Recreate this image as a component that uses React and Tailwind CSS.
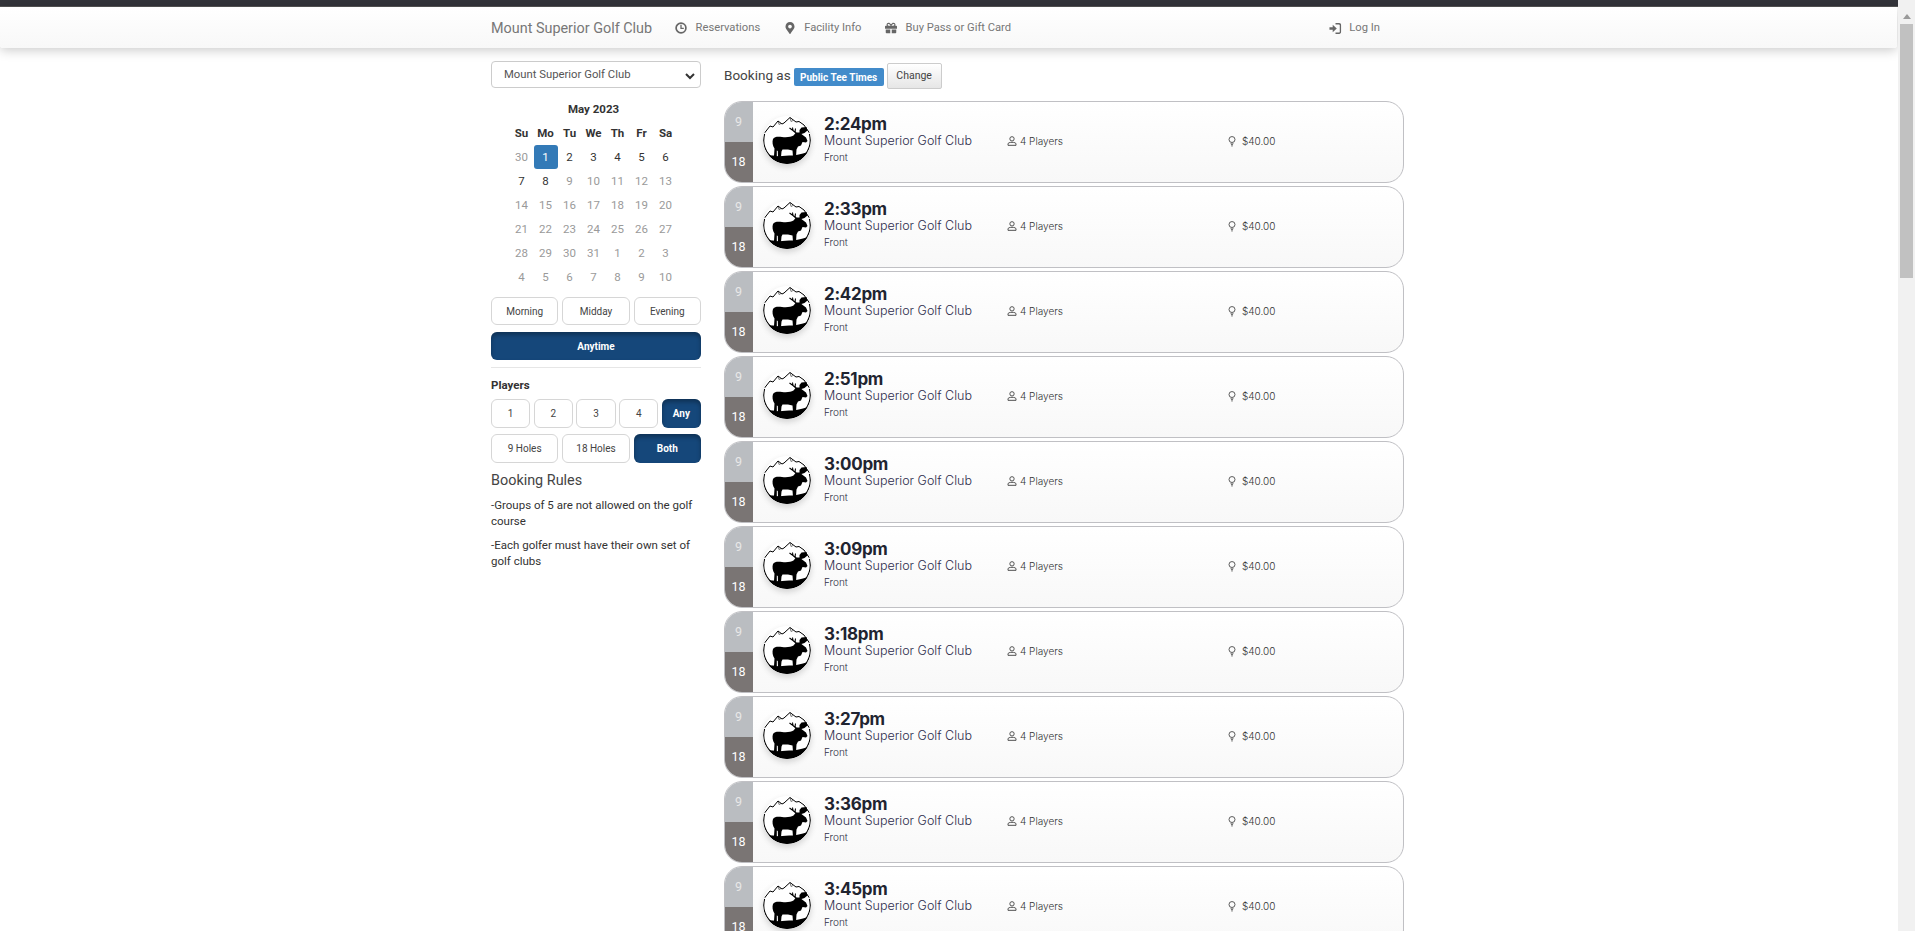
import React from "react";
import { FaMapMarkerAlt, FaGift } from "react-icons/fa";

const roboto = "font-['Roboto',sans-serif]";
const card = "font-['Inter',sans-serif]";

function Moose() {
  return (
    <svg viewBox="0 0 48 48" className="w-12 h-12 shrink-0 rounded-full shadow-[0_3px_6px_rgba(0,0,0,0.16)]">
      <defs>
        <clipPath id="disc"><circle cx="24" cy="24" r="24" /></clipPath>
      </defs>
      <circle cx="24" cy="24" r="24" fill="#fff" />
      <g clipPath="url(#disc)">
        <path d="M0 39 L10 39.5 C16 41 22 39.5 30 39.5 C36 39 42 37 48 35 L48 48 L0 48 Z" fill="#000" />
        <path d="M1.5 17 L7 10 L10 11 L15 5 L19 8 L21 7 L27 1.5 L33 6 L36 5.5 L41 9 L46.5 17" fill="none" stroke="#000" strokeWidth="1" />
        <path d="M15 5 L16 8.5 L18 7.5 M27 1.5 L28 5.5 L30 4.5" fill="none" stroke="#000" strokeWidth="0.5" />
      </g>
      <path d="M11 40 L11.5 32.5 C9.5 30 9 25.5 10 23 C11.5 20.5 15 20.5 19 21 C24 21.5 28 21 30.5 19.5 L33 16.5 L37 16.5 L39 18.5 L43 21.5 L44.5 25 L43 26.5 L39.5 26 L38 29.5 L35 30.5 L33.5 33.5 L33 41 L30 41 L29.5 34.5 L25 33.5 L19.5 33.5 L18.5 35.5 L18 41 L15 41 L14.8 35 L13.8 34.5 L13.8 40 Z" fill="#000" />
      <path d="M33.5 17.5 L30 14.5 L26.5 12 M30 14.5 L29.5 11.5 M32 16 L32.5 12.5" fill="none" stroke="#000" strokeWidth="1.1" />
      <path d="M36.5 17.5 L36.5 14 L38.5 11.5 L43.5 11 L44.5 14.5 L41.5 17 L38.5 18 Z" fill="#000" />
      <path d="M1.6 18 A23.2 23.2 0 0 0 24 47.2 A23.2 23.2 0 0 0 46.4 18" fill="none" stroke="#000" strokeWidth="1.1" />
    </svg>
  );
}

function ClockIcon() {
  return (
    <svg viewBox="0 0 12 12" className="w-[12px] h-[12px]" fill="none" stroke="currentColor" strokeWidth="1.7">
      <circle cx="6" cy="6" r="4.9" />
      <path d="M6 2.8 V6.4 H8.8" strokeWidth="1.3" />
    </svg>
  );
}

function PersonIcon() {
  return (
    <svg viewBox="0 0 12 12" className="w-[10px] h-[10px] text-[#444]" fill="none" stroke="currentColor" strokeWidth="1.1">
      <circle cx="6" cy="3.4" r="2.6" />
      <path d="M1.2 11.2 V9.6 C1.2 8.2 3 7.6 6 7.6 C9 7.6 10.8 8.2 10.8 9.6 V11.2 Z" />
    </svg>
  );
}

function TeeIcon() {
  return (
    <svg viewBox="0 0 10 14" className="w-[8px] h-[11px] text-[#444]" fill="none" stroke="currentColor">
      <circle cx="5" cy="4.5" r="3.8" strokeWidth="1.1" />
      <path d="M2.6 9.4 H7.4 L5.6 11 L5.4 13.8 H4.6 L4.4 11 Z" fill="currentColor" stroke="none" />
    </svg>
  );
}

function LoginIcon() {
  return (
    <svg viewBox="0 0 14 14" className="w-[13px] h-[13px] text-[#666]" fill="currentColor">
      <path d="M0.5 5.6 H4 V3 L8.4 7 L4 11 V8.4 H0.5 Z" />
      <path d="M7 1.2 H11 C12.2 1.2 13 2 13 3.2 V10.8 C13 12 12.2 12.8 11 12.8 H7 V11.4 H10.6 C11.2 11.4 11.6 11 11.6 10.4 V3.6 C11.6 3 11.2 2.6 10.6 2.6 H7 Z" />
    </svg>
  );
}

function NavItem({ icon, label }) {
  return (
    <div className="flex items-center gap-[8.5px] text-[11.2px] text-[#777]">
      <span className="w-[12px] flex justify-center text-[#666]">{icon}</span>
      <span>{label}</span>
    </div>
  );
}

function Btn({ children, active, className = "" }) {
  return (
    <div
      className={
        "flex items-center justify-center rounded-[6px] text-[10px] " +
        (active
          ? "bg-[#15477a] text-white font-bold shadow-[inset_0_3px_4px_rgba(0,0,0,0.3)] "
          : "bg-white border border-[#d6d6d6] text-[#444] ") +
        className
      }
    >
      {children}
    </div>
  );
}

const weeks = [
  [30, 1, 2, 3, 4, 5, 6],
  [7, 8, 9, 10, 11, 12, 13],
  [14, 15, 16, 17, 18, 19, 20],
  [21, 22, 23, 24, 25, 26, 27],
  [28, 29, 30, 31, 1, 2, 3],
  [4, 5, 6, 7, 8, 9, 10],
];

function dayClass(w, i) {
  if (w === 0 && i === 1) return "bg-[#337ab7] text-white rounded-[3px]";
  if ((w === 0 && i > 1) || (w === 1 && i <= 1)) return "text-[#333]";
  return "text-[#9a9a9a]";
}

function Calendar() {
  return (
    <div className="mt-[10px] flex flex-col items-center">
      <div className="text-[11.5px] font-bold text-[#333] h-[23px] leading-[22px] -ml-[5px]">May 2023</div>
      <div className="grid grid-cols-[repeat(7,24px)] auto-rows-[24px] text-[11.5px] text-center leading-[24px] -ml-[5px]">
        {["Su", "Mo", "Tu", "We", "Th", "Fr", "Sa"].map((d) => (
          <div key={d} className="font-bold text-[#333]">{d}</div>
        ))}
        {weeks.map((row, w) =>
          row.map((d, i) => (
            <div key={w + "-" + i} className={dayClass(w, i)}>{d}</div>
          ))
        )}
      </div>
    </div>
  );
}

function Card({ time }) {
  return (
    <div className={"flex h-[82px] shrink-0 w-[680px] rounded-[18px] border border-[#c0c0c4] overflow-hidden bg-gradient-to-b from-white to-[#f8f8f8] " + card}>
      <div className={"w-[29px] shrink-0 flex flex-col text-white text-[12.5px] text-center -ml-px -my-px " + roboto}>
        <div className="h-[41px] shrink-0 bg-[#babdc1] text-[#e8e8e8] flex items-center justify-center pt-[2px]">9</div>
        <div className="flex-1 bg-[#7a7574] flex items-center justify-center">18</div>
      </div>
      <div className="ml-[10px] mt-[14px]"><Moose /></div>
      <div className="ml-[13px] w-[183px] pt-[12px]">
        <div className="text-[17px] font-bold leading-[20px] tracking-[-0.3px] text-[#1f2430]">{time}</div>
        <div className="text-[12.5px] font-light leading-[16px] -mt-px text-[#2c2c4c] whitespace-nowrap">Mount Superior Golf Club</div>
        <div className="text-[10px] font-light leading-[14px] mt-[1px] text-[#2f2f45]">Front</div>
      </div>
      <div className="w-[221px] flex items-center gap-[3px] h-[78px] text-[10px] font-light text-[#333]">
        <PersonIcon />
        <span>4 Players</span>
      </div>
      <div className="flex items-center gap-[6px] h-[78px] text-[10px] font-light text-[#333]">
        <TeeIcon />
        <span>$40.00</span>
      </div>
    </div>
  );
}

const times = ["2:24pm", "2:33pm", "2:42pm", "2:51pm", "3:00pm", "3:09pm", "3:18pm", "3:27pm", "3:36pm", "3:45pm"];

export default function App() {
  return (
    <div className={"h-[931px] w-[1915px] overflow-hidden flex bg-white " + roboto}>
      <div className="flex-1 min-w-0 flex flex-col">
        <div className="h-[7px] shrink-0 bg-[#33343a] border-b border-[#555]" />
        <header className="relative z-10 h-[41px] shrink-0 flex items-center pt-[2px] pl-[491px] pr-[517px] mr-px bg-gradient-to-b from-white to-[#f8f8f8] rounded-b-[3px] shadow-[0_2px_12px_rgba(0,0,0,0.22)]">
          <span className="text-[14.4px] text-[#777]">Mount Superior Golf Club</span>
          <div className="ml-[23px] flex items-center gap-[23.5px]">
            <NavItem icon={<ClockIcon />} label="Reservations" />
            <NavItem icon={<FaMapMarkerAlt size={12} />} label="Facility Info" />
            <NavItem icon={<FaGift size={12} />} label="Buy Pass or Gift Card" />
          </div>
          <div className="ml-auto flex items-center gap-[7px] text-[11.2px] text-[#777]">
            <LoginIcon />
            <span>Log In</span>
          </div>
        </header>
        <div className="flex-1 min-h-0 flex pl-[491px] pt-[13px]">
          <aside className="w-[210px] shrink-0">
            <div className="h-[27px] rounded-[4px] border border-[#ccc] pl-[12px] pr-[4px] pt-[2px] flex items-center justify-between text-[11.3px] text-[#555]">
              <span>Mount Superior Golf Club</span>
              <svg viewBox="0 0 12 12" className="w-[12px] h-[12px]" fill="none" stroke="#333" strokeWidth="2"><path d="M2 4 L6 8 L10 4" /></svg>
            </div>
            <Calendar />
            <div className="mt-[8px] grid grid-cols-3 gap-[4px]">
              <Btn className="h-[28px]">Morning</Btn>
              <Btn className="h-[28px]">Midday</Btn>
              <Btn className="h-[28px]">Evening</Btn>
            </div>
            <Btn active className="h-[28px] mt-[7px]">Anytime</Btn>
            <div className="mt-[7px] border-t border-[#e6e6e6]" />
            <div className="mt-[10px] text-[11.5px] font-bold text-[#333] leading-[14px]">Players</div>
            <div className="mt-[7px] grid grid-cols-5 gap-[3.5px]">
              <Btn className="h-[29px]">1</Btn>
              <Btn className="h-[29px]">2</Btn>
              <Btn className="h-[29px]">3</Btn>
              <Btn className="h-[29px]">4</Btn>
              <Btn active className="h-[29px]">Any</Btn>
            </div>
            <div className="mt-[6px] grid grid-cols-3 gap-[4px]">
              <Btn className="h-[29px]">9 Holes</Btn>
              <Btn className="h-[29px]">18 Holes</Btn>
              <Btn active className="h-[29px]">Both</Btn>
            </div>
            <div className="mt-[8px] text-[14.4px] text-[#444] leading-[20px]">Booking Rules</div>
            <p className="mt-[6px] text-[11.5px] leading-[16px] text-[#333]">-Groups of 5 are not allowed on the golf course</p>
            <p className="mt-[8px] text-[11.5px] leading-[16px] text-[#333]">-Each golfer must have their own set of golf clubs</p>
          </aside>
          <main className="ml-[23px] flex flex-col">
            <div className="h-[26px] flex items-center mt-[2px]">
              <span className="text-[13.5px] text-[#444] -mt-[2px]">Booking as</span>
              <span className="ml-[3px] mt-[2px] h-[18px] w-[90px] flex items-center justify-center rounded-[2px] bg-[#428bca] text-white text-[10px] font-bold whitespace-nowrap">Public Tee Times</span>
              <span className="ml-[3px] h-[26px] w-[55px] flex items-center justify-center rounded-[2px] border border-[#ccc] bg-gradient-to-b from-white to-[#e6e6e6] text-[10.5px] text-[#444]">Change</span>
            </div>
            <div className="mt-[12px] flex flex-col gap-[3px]">
              {times.map((t) => <Card key={t} time={t} />)}
            </div>
          </main>
        </div>
      </div>
      <div className="w-[17px] shrink-0 bg-[#f1f1f1] flex flex-col items-center z-20 relative">
        <div className="h-[24px] w-full flex items-center justify-center pt-[8px]">
          <svg viewBox="0 0 8 5" className="w-[8px] h-[5px]"><path d="M0 5 L4 0 L8 5 Z" fill="#9a9a9a" /></svg>
        </div>
        <div className="h-[254px] w-[13px] bg-[#c1c1c1]" />
      </div>
    </div>
  );
}
